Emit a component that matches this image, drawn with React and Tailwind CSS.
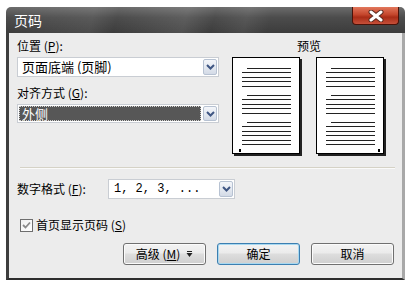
import React from "react";

const cjk = "font-['Noto_Sans_CJK_SC','Noto_Sans',sans-serif]";

function DropButton() {
  return (
    <div className="w-[14px] h-full flex items-center justify-center border border-[#b7c2d2] rounded-[2px] bg-[linear-gradient(180deg,#f4f6fa_0%,#e3e8f0_55%,#d3dae6_100%)]">
      <svg width="9" height="6" viewBox="0 0 9 6">
        <path d="M1 1 L4.5 4.5 L8 1" fill="none" stroke="#3f5683" strokeWidth="2" />
      </svg>
    </div>
  );
}

function Combo({ text, selected, mono, className }) {
  return (
    <div className={`flex items-stretch bg-white border border-[#c9cdd3] p-[1px] ${className}`}>
      <div className="flex-1 flex items-center pr-[2px]">
        {selected ? (
          <div className="flex-1 h-full flex items-center pl-[3px] bg-[#575757] outline-1 outline-dotted outline-[#d0d0d0] -outline-offset-1 text-white text-[13px]">
            {text}
          </div>
        ) : (
          <span
            className={
              mono
                ? "pl-[4px] text-[12px] whitespace-pre font-['Liberation_Mono',monospace] text-black"
                : "pl-[3px] text-[13px] text-black"
            }
          >
            {text}
          </span>
        )}
      </div>
      <DropButton />
    </div>
  );
}

function Key({ k }) {
  return (
    <>
      {" "}(<span className="underline">{k}</span>)
    </>
  );
}

function PagePreview({ dotRight }) {
  const ys = [11, 15, 20, 24, 29, 38, 42, 47, 51, 56, 65, 69, 74, 78, 83, 87];
  const shorts = [11, 38, 65];
  return (
    <svg width="70" height="99" viewBox="0 0 70 99">
      <rect x="2" y="2" width="68" height="97" fill="#222" />
      <rect x="0.5" y="0.5" width="67" height="96" fill="#fff" stroke="#000" />
      {ys.map((y) => (
        <line
          key={y}
          x1={shorts.includes(y) ? 15 : 10}
          x2="59"
          y1={y + 0.5}
          y2={y + 0.5}
          stroke="#222"
          strokeWidth="1"
        />
      ))}
      <rect x={dotRight ? 62 : 7} y="92" width="2" height="3" fill="#000" />
    </svg>
  );
}

function Button({ children, primary }) {
  return (
    <button
      className={`w-[83px] h-[22px] flex items-center justify-center rounded-[3px] border text-[12px] text-black bg-[linear-gradient(180deg,#f3f3f3_0%,#ebebeb_45%,#dddddd_50%,#cfcfcf_100%)] ${
        primary
          ? "border-[#3c7fb1] shadow-[inset_0_0_0_1px_#a8d8f0]"
          : "border-[#707070] shadow-[inset_0_0_0_1px_#fbfbfb]"
      }`}
    >
      {children}
    </button>
  );
}

export default function App() {
  return (
    <div className={`w-[413px] h-[286px] bg-white pt-[7px] pl-[6px] ${cjk}`}>
      <div className="w-[399px] h-[273px] flex flex-col">
        {/* title bar */}
        <div className="h-[26px] flex items-start justify-between rounded-t-[5px] bg-[linear-gradient(105deg,transparent_0%,rgba(255,255,255,0.08)_22%,transparent_28%,rgba(255,255,255,0.1)_45%,transparent_52%,rgba(255,255,255,0.07)_60%,transparent_66%),linear-gradient(180deg,#6c6c6c_0%,#4c4c4c_40%,#3c3c3c_100%)]">
          <span className="pl-[8px] pt-[4px] text-[14px] leading-[18px] text-white">页码</span>
          <div className="mr-[6px] w-[47px] h-[18px] flex items-center justify-center rounded-b-[4px] border border-t-0 border-[#4a1208] bg-[linear-gradient(180deg,#e2775c_0%,#c4462c_45%,#a92c16_60%,#c6503a_100%)]">
            <svg width="16" height="12" viewBox="0 0 16 12">
              <path d="M3 2 L13 10 M13 2 L3 10" stroke="#5a2a20" strokeWidth="5" strokeLinecap="round" />
              <path d="M3 2 L13 10 M13 2 L3 10" stroke="#fff" strokeWidth="3" strokeLinecap="round" />
            </svg>
          </div>
        </div>

        {/* client */}
        <div className="flex-1 flex flex-col bg-[#ececec] border-l-[3px] border-l-[#3e3e3e] border-r-[3px] border-r-[#a8a8a8] border-b-[2px] border-b-[#2e2e2e] pl-[8px] pr-[14px] pt-[5px] text-[12px] text-black">
          <div className="flex gap-[13px]">
            <div className="w-[202px] flex flex-col">
              <div className="h-[16px] leading-[16px]">
                位置<Key k="P" />:
              </div>
              <Combo text="页面底端 (页脚)" className="mt-[3px] h-[20px]" />
              <div className="mt-[8px] h-[16px] leading-[16px]">
                对齐方式<Key k="G" />:
              </div>
              <Combo text="外侧" selected className="mt-[3px] h-[19px]" />
            </div>
            <div className="w-[154px] flex flex-col items-center">
              <div className="h-[16px] leading-[16px]">预览</div>
              <div className="mt-[3px] flex gap-[14px]">
                <PagePreview />
                <PagePreview dotRight />
              </div>
            </div>
          </div>

          <div className="mt-[11px] ml-[3px] -mr-[7px] h-[2px] border-t border-t-[#d5d2c6] border-b border-b-[#fafafa]" />

          <div className="mt-[10px] flex items-center h-[20px]">
            <div className="w-[91px] leading-[16px]">
              数字格式<Key k="F" />:
            </div>
            <Combo text="1, 2, 3, ..." mono className="w-[127px] h-[20px]" />
          </div>

          <div className="mt-[18px] flex items-center h-[16px] pl-[3px] gap-[3px]">
            <div className="w-[13px] h-[13px] border border-[#6e6e6e] bg-[linear-gradient(135deg,#f0f0f0,#ffffff)] flex items-center justify-center">
              <svg width="9" height="8" viewBox="0 0 9 8">
                <path d="M1 4 L3.5 6.5 L8 1.5" fill="none" stroke="#8a8a8a" strokeWidth="1.8" />
              </svg>
            </div>
            <span className="leading-[16px]">
              首页显示页码<Key k="S" />
            </span>
          </div>

          <div className="mt-[10px] -mr-[6px] flex justify-end gap-[11px]">
            <Button>
              <span>
                高级<Key k="M" />
              </span>
              <svg className="ml-[6px]" width="7" height="7" viewBox="0 0 7 7">
                <rect x="1" y="0" width="5" height="1" fill="#222" />
                <path d="M0.5 2 L6.5 2 L3.5 6 Z" fill="#222" />
              </svg>
            </Button>
            <Button primary>确定</Button>
            <Button>取消</Button>
          </div>
        </div>
      </div>
    </div>
  );
}
